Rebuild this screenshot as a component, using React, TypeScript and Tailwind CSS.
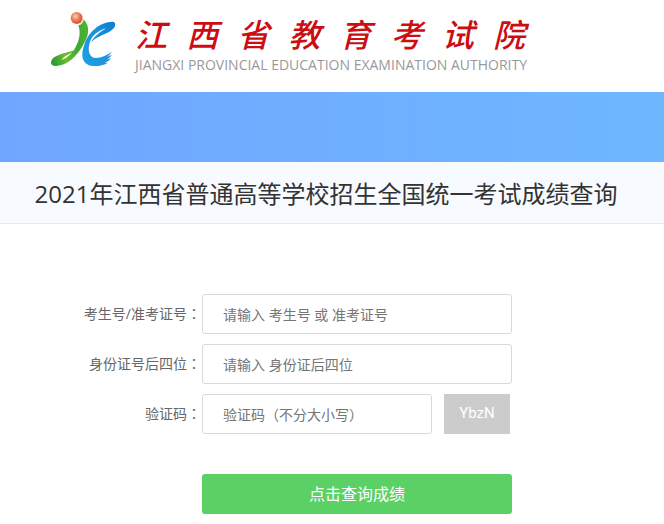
import { useState } from "react"

const siteName = ["江", "西", "省", "教", "育", "考", "试", "院"];

function Logo() {
    return (
        <svg viewBox="6 6 201 174" className="w-[67px] h-[58px] shrink-0" aria-hidden="true">
            <defs>
                <linearGradient id="green" x1="0" y1="0.7" x2="1" y2="0.3">
                    <stop offset="0" stopColor="#2f9e35" />
                    <stop offset="0.3" stopColor="#6cbf2c" />
                    <stop offset="0.65" stopColor="#3aa935" />
                    <stop offset="1" stopColor="#4fb233" />
                </linearGradient>
                <linearGradient id="blue" x1="0" y1="1" x2="1" y2="0">
                    <stop offset="0" stopColor="#1b9fe6" />
                    <stop offset="0.5" stopColor="#1f94dd" />
                    <stop offset="1" stopColor="#0a7ed2" />
                </linearGradient>
                <radialGradient id="ball" cx="0.4" cy="0.35" r="0.65">
                    <stop offset="0" stopColor="#fbcdb0" />
                    <stop offset="0.5" stopColor="#ea7f5c" />
                    <stop offset="1" stopColor="#dc4f35" />
                </radialGradient>
            </defs>
            {/* green "J" swoosh */}
            <path d="M104 32 C121 44 126 70 114 94 C98 130 66 174 22 174 C8 174 6 162 13 153 C26 139 56 133 87 126 C70 134 46 146 40 156 C54 152 70 140 79 124 C90 106 101 80 91 52 C101 50 106 42 104 32 Z" fill="url(#green)" />
            {/* blue "C", upper leaf and lower bowl */}
            <path d="M109 110 C119 74 154 42 194 41 C205 42 203 56 194 64 C178 79 150 82 129 103 C138 84 158 72 174 61 C150 68 132 82 125 104 C118 128 124 149 144 150 C160 150 176 142 192 131 C186 139 182 143 176 147 L192 140 C186 148 181 152 174 155 L190 151 C183 159 176 163 169 165 L180 164 C164 174 136 178 120 170 C99 159 100 134 109 110 Z" fill="url(#blue)" />
            <circle cx="86" cy="30" r="18" fill="url(#ball)" />
            <path d="M88 51 C98 50 106 42 106 31" fill="none" stroke="#fff6b8" strokeWidth="3" />
        </svg>
    )
}

export default function App() {
    const [examNo, setExamNo] = useState("");
    const [idCard, setIdCard] = useState("");
    const [captcha, setCaptcha] = useState("");

    return (
        <div className="min-h-screen bg-white text-[#666666] font-['Open_Sans','Noto_Sans_CJK_SC',sans-serif]">
            <header className="h-[92px] pl-[50px] pt-[10px] flex items-start gap-[18px]">
                <Logo />
                <div className="w-[390px]">
                    <h1 className="flex justify-between text-[32px] leading-[46px] italic font-medium text-[#cc0d12] font-['Noto_Sans_CJK_SC',sans-serif]">
                        {siteName.map((char) => (
                            <span key={char}>{char}</span>
                        ))}
                    </h1>
                    <p className="text-[14px] leading-[18px] whitespace-nowrap text-[#999999]">
                        JIANGXI PROVINCIAL EDUCATION EXAMINATION AUTHORITY
                    </p>
                </div>
            </header>

            <div className="h-[70px] bg-linear-to-r from-[#70a6ff] to-[#6eb7ff]"></div>

            <div className="h-[62px] pr-3 pt-[2px] flex items-center justify-center bg-[#f7faff] border-b border-[#e2e7f0]">
                <h2 className="text-2xl whitespace-nowrap text-[#333333]">
                    2021年江西省普通高等学校招生全国统一考试成绩查询
                </h2>
            </div>

            <form className="pt-[70px] pl-[60px] flex flex-col gap-[10px] text-sm" onSubmit={(e) => e.preventDefault()}>
                <div className="flex items-center">
                    <label htmlFor="examNo" className="w-[142px] pr-px pb-[2px] text-right">
                        考生号/准考证号<span className="font-['Noto_Sans_CJK_TC']">：</span>
                    </label>
                    <input
                        id="examNo"
                        value={examNo}
                        onChange={(e) => setExamNo(e.target.value)}
                        placeholder="请输入 考生号 或 准考证号"
                        className="w-[310px] h-10 px-5 border border-[#d9d9d9] rounded-[3px] placeholder:text-[#757575]"
                    />
                </div>
                <div className="flex items-center">
                    <label htmlFor="idCard" className="w-[142px] pr-px pb-[2px] text-right">
                        身份证号后四位<span className="font-['Noto_Sans_CJK_TC']">：</span>
                    </label>
                    <input
                        id="idCard"
                        value={idCard}
                        onChange={(e) => setIdCard(e.target.value)}
                        placeholder="请输入 身份证后四位"
                        className="w-[310px] h-10 px-5 border border-[#d9d9d9] rounded-[3px] placeholder:text-[#757575]"
                    />
                </div>
                <div className="flex items-center">
                    <label htmlFor="captcha" className="w-[142px] pr-px pb-[2px] text-right">
                        验证码<span className="font-['Noto_Sans_CJK_TC']">：</span>
                    </label>
                    <input
                        id="captcha"
                        value={captcha}
                        onChange={(e) => setCaptcha(e.target.value)}
                        placeholder="验证码（不分大小写）"
                        className="w-[230px] h-10 px-5 border border-[#d9d9d9] rounded-[3px] placeholder:text-[#757575]"
                    />
                    <button type="button" className="ml-3 w-[66px] h-10 bg-[#cccccc] text-white text-[15px] font-['Roboto',sans-serif]">
                        YbzN
                    </button>
                </div>
                <button type="submit" className="mt-[30px] ml-[142px] w-[310px] h-10 rounded-[3px] bg-[#5bd165] text-white text-base">
                    点击查询成绩
                </button>
            </form>
        </div>
    )
}
